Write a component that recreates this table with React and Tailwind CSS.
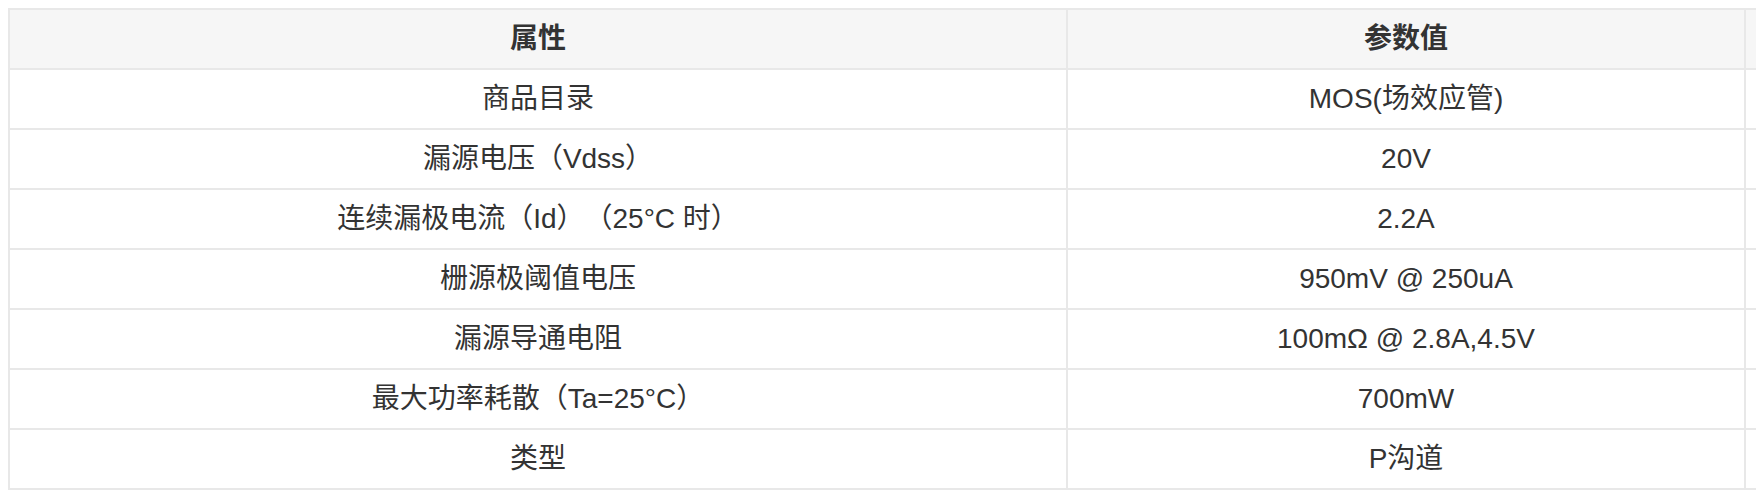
import React from "react";

const rows = [
  ["商品目录", "MOS(场效应管)"],
  ["漏源电压（Vdss）", "20V"],
  ["连续漏极电流（Id）（25°C 时）", "2.2A"],
  ["栅源极阈值电压", "950mV @ 250uA"],
  ["漏源导通电阻", "100mΩ @ 2.8A,4.5V"],
  ["最大功率耗散（Ta=25°C）", "700mW"],
  ["类型", "P沟道"],
];

export default function App() {
  return (
    <div
      className="w-full h-[494px] overflow-hidden bg-white text-[#333333] [text-spacing-trim:space-all]"
      style={{ fontFamily: '"Liberation Sans", "Noto Sans CJK SC", sans-serif' }}
    >
      <div className="pl-2 pt-2">
        <table className="w-max border-separate border-spacing-0 border-t-2 border-l-2 border-[#e8e8e8] text-[28px]">
          <thead>
            <tr className="bg-[#f6f6f6]">
              <th className="w-[1058px] h-[60px] p-0 border-r-2 border-b-2 border-[#e8e8e8] text-center font-bold">
                属性
              </th>
              <th className="w-[678px] h-[60px] p-0 border-r-2 border-b-2 border-[#e8e8e8] text-center font-bold">
                参数值
              </th>
              <th className="w-[300px] h-[60px] p-0 border-r-2 border-b-2 border-[#e8e8e8] text-center font-bold"></th>
            </tr>
          </thead>
          <tbody>
            {rows.map(([k, v]) => (
              <tr key={k}>
                <td className="h-[60px] p-0 border-r-2 border-b-2 border-[#e8e8e8] text-center">{k}</td>
                <td className="h-[60px] p-0 border-r-2 border-b-2 border-[#e8e8e8] text-center">{v}</td>
                <td className="h-[60px] p-0 border-r-2 border-b-2 border-[#e8e8e8] text-center"></td>
              </tr>
            ))}
          </tbody>
        </table>
      </div>
    </div>
  );
}
